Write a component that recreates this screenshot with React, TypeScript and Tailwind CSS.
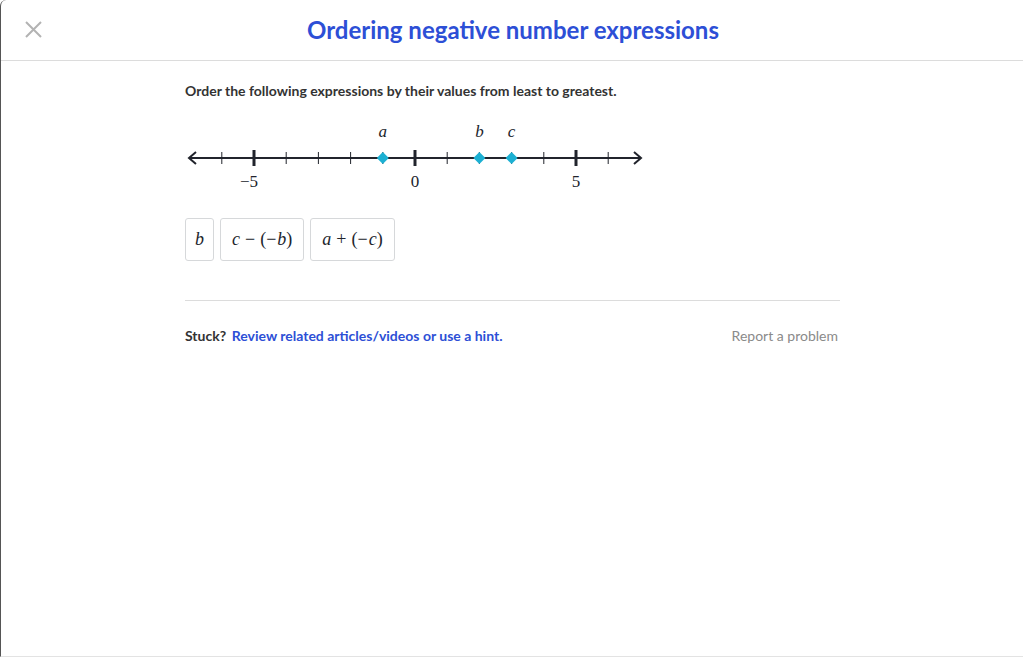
import React from 'react';

const ZERO = 230;
const UNIT = 32.2;

// 수직선 (number line)
const NumberLine = () => {
  const ticks = Array.from({ length: 13 }, (_, i) => i - 6);
  const points = [
    { name: 'a', v: -1 },
    { name: 'b', v: 2 },
    { name: 'c', v: 3 },
  ];
  const x = (v: number) => ZERO + v * UNIT;

  return (
    <svg width="462" height="80" viewBox="0 0 462 80" className="block">
      <line x1="5" y1="39" x2="455" y2="39" stroke="#21242c" strokeWidth="2" />
      <polyline points="11,33 4,39 11,45" fill="none" stroke="#21242c" strokeWidth="2" />
      <polyline points="449,33 456,39 449,45" fill="none" stroke="#21242c" strokeWidth="2" />
      {ticks.map((t) => {
        const major = t % 5 === 0;
        return (
          <line
            key={t}
            x1={x(t)}
            x2={x(t)}
            y1={major ? 31 : 33}
            y2={major ? 47 : 45}
            stroke="#21242c"
            strokeWidth={major ? 3 : 1}
          />
        );
      })}
      {points.map((p) => (
        <g key={p.name}>
          <polygon
            points={`${x(p.v)},33 ${x(p.v) + 6},39 ${x(p.v)},45 ${x(p.v) - 6},39`}
            fill="#1cb0d3"
          />
          <text
            x={x(p.v)}
            y="18"
            textAnchor="middle"
            fontFamily="'Liberation Serif', serif"
            fontStyle="italic"
            fontSize="17"
            fill="#21242c"
          >
            {p.name}
          </text>
        </g>
      ))}
      {[-5, 0, 5].map((n) => (
        <text
          key={n}
          x={x(n) + (n < 0 ? -5 : 0)}
          y="68"
          textAnchor="middle"
          fontFamily="'Liberation Serif', serif"
          fontSize="17"
          fill="#21242c"
        >
          {n < 0 ? `\u2212${-n}` : n}
        </text>
      ))}
    </svg>
  );
};

const Card = ({ children, pad }: { children: React.ReactNode; pad: string }) => (
  <div
    className={`h-[43px] ${pad} flex items-center border border-[#d6d8da] rounded-[3px] bg-white text-[18px] text-[#21242c] font-['Liberation_Serif',serif]`}
  >
    {children}
  </div>
);

const Op = ({ c }: { c: string }) => <span className="mx-[5px]">{c}</span>;

const App = () => {
  return (
    <div className="h-[657px] w-[1023px] bg-white border-l border-l-[#555] border-b border-b-[#e3e3e3] rounded-tl-[6px] font-['Lato',sans-serif] text-[#21242c] overflow-hidden">
      {/* 헤더 */}
      <div className="relative h-[61px] border-b border-[#dcdcdc] flex items-center justify-center">
        <button className="absolute left-[23px] top-[20px] text-[#b3b3b3]">
          <svg width="19" height="19" viewBox="0 0 19 19">
            <path d="M2 2L17 17M17 2L2 17" stroke="currentColor" strokeWidth="2" />
          </svg>
        </button>
        <h1 className="text-[24px] font-bold text-[#2d4fd6] ml-[2px]">Ordering negative number expressions</h1>
      </div>

      <div className="w-[655px] ml-[184px]">
        <p className="mt-[19px] text-[14px] font-bold text-[#333]">
          Order the following expressions by their values from least to greatest.
        </p>

        <div className="mt-[18px]">
          <NumberLine />
        </div>

        <div className="mt-[19px] flex gap-[6px]">
          <Card pad="px-[9px]">
            <i>b</i>
          </Card>
          <Card pad="px-[10px]">
            <span className="px-[1px]">
              <i>c</i>
              <Op c={'\u2212'} />(<span className="mr-[1px]">&minus;</span><i>b</i>)
            </span>
          </Card>
          <Card pad="px-[10px]">
            <span className="px-[1px]">
              <i>a</i>
              <Op c="+" />(<span className="mr-[1px]">&minus;</span><i>c</i>)
            </span>
          </Card>
        </div>

        <div className="mt-[39px] border-t border-[#dcdcdc]" />

        <div className="mt-[24px] flex items-center justify-between text-[14px]">
          <div>
            <span className="font-bold text-[#333]">Stuck?</span>{' '}
            <a className="font-bold text-[#2d4fd6] ml-[2px]">Review related articles/videos or use a hint.</a>
          </div>
          <a className="text-[#8a8a8a] mr-[2px]">Report a problem</a>
        </div>
      </div>
    </div>
  );
};

export default App;
